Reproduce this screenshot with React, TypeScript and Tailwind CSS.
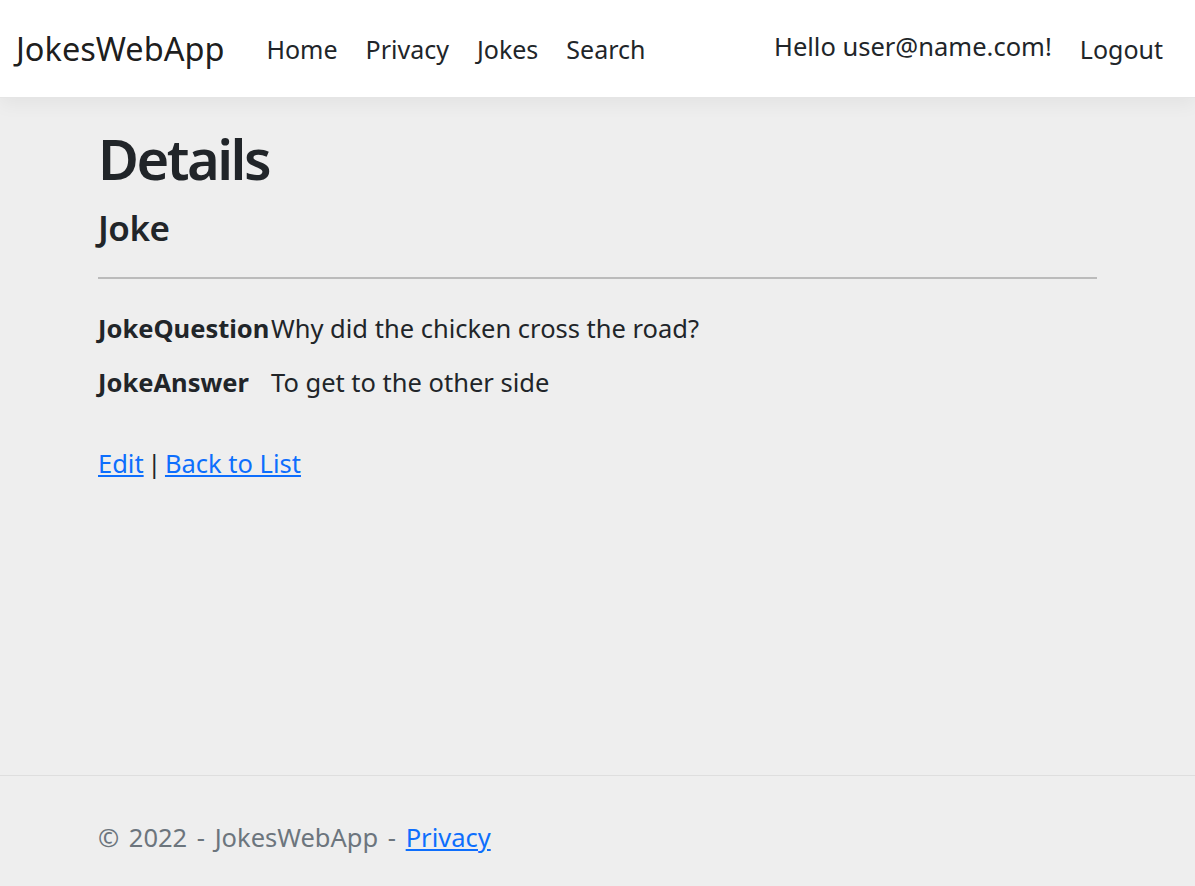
import React from 'react'

const font = { fontFamily: '"Noto Sans", "Open Sans", sans-serif' }

const NavLink = ({ label }: { label: string }) => (
  <a href="#" className="px-[14px] text-[25px] leading-[36px] text-[#212529]">{label}</a>
)

const App: React.FC = () => {
  return (
    <div style={font} className="min-h-screen flex flex-col bg-[#eeeeee] text-[#212529]">
      <header className="h-[98px] bg-white shadow-[0_6px_18px_rgba(0,0,0,0.05)] border-b border-[#e5e5e5] flex items-center pl-[16px] pr-[18px]">
        <a href="#" className="text-[32.5px] leading-[45px] text-[rgba(0,0,0,0.9)] mr-[28px]">JokesWebApp</a>
        <nav className="flex flex-1 items-center">
          <NavLink label="Home" />
          <NavLink label="Privacy" />
          <NavLink label="Jokes" />
          <NavLink label="Search" />
        </nav>
        <div className="flex items-center">
          <span className="text-[25.5px] leading-[36px] text-[#212529] -mt-[5px] px-[14px]">Hello user@name.com!</span>
          <NavLink label="Logout" />
        </div>
      </header>

      <main className="flex-1">
        <div className="w-[999px] mx-auto pt-[24px]">
          <h1 className="text-[56px] leading-[72px] font-semibold tracking-[-2.5px] mb-[12px]">Details</h1>
          <div>
            <h4 className="text-[35px] leading-[43px] font-semibold tracking-[-0.5px]">Joke</h4>
            <hr className="mt-[28px] mb-[31px] border-0 h-[2px] bg-[#bbbbbb]" />
            <dl className="text-[25.5px] leading-[36px]">
              <div className="flex mb-[18px]">
                <dt className="w-[173px] shrink-0 font-bold whitespace-nowrap">JokeQuestion</dt>
                <dd>Why did the chicken cross the road?</dd>
              </div>
              <div className="flex">
                <dt className="w-[173px] shrink-0 font-bold whitespace-nowrap">JokeAnswer</dt>
                <dd>To get to the other side</dd>
              </div>
            </dl>
          </div>
          <div className="mt-[45px] text-[25.5px] leading-[36px]">
            <a href="#" className="text-[#0d6efd] underline">Edit</a>
            <span className="[word-spacing:-3px]">{' | '}</span>
            <a href="#" className="text-[#0d6efd] underline">Back to List</a>
          </div>
        </div>
      </main>

      <footer className="h-[111px] border-t border-[#dedede] flex items-center pt-[12px]">
        <div className="w-[999px] mx-auto text-[25.5px] leading-[36px] [word-spacing:3px] text-[#6c757d]">
          © 2022 - JokesWebApp - <a href="#" className="text-[#0d6efd] underline">Privacy</a>
        </div>
      </footer>
    </div>
  )
}

export default App
